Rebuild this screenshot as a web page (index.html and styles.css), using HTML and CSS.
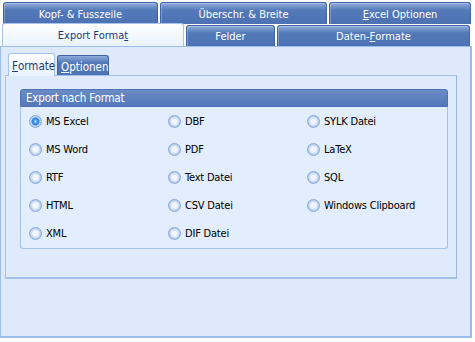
FILE: index.html
```html
<!DOCTYPE html>
<html lang="de">
<head>
    <meta charset="UTF-8">
    <title>Export Einstellungen</title>
    <link rel="stylesheet" href="styles.css">
</head>
<body>
    <div class="dialog">
        <div class="tab-row row-top">
            <div class="tab w1">Kopf- &amp; Fusszeile</div>
            <div class="tab w2">Überschr. &amp; Breite</div>
            <div class="tab w3"><u>E</u>xcel Optionen</div>
        </div>
        <div class="tab-row row-bottom">
            <div class="tab active w4">Export Forma<u>t</u></div>
            <div class="tab w5">Felder</div>
            <div class="tab w6">Daten-<u>F</u>ormate</div>
        </div>

        <div class="panel">
            <div class="sub-tabs">
                <div class="sub-tab active"><u>F</u>ormate</div>
                <div class="sub-tab"><u>O</u>ptionen</div>
            </div>
            <div class="sub-panel">
                <div class="group">
                    <div class="group-header">Export nach Format</div>
                    <div class="options">
                        <label class="option"><span class="radio checked"></span>MS Excel</label>
                        <label class="option"><span class="radio"></span>DBF</label>
                        <label class="option"><span class="radio"></span>SYLK Datei</label>

                        <label class="option"><span class="radio"></span>MS Word</label>
                        <label class="option"><span class="radio"></span>PDF</label>
                        <label class="option"><span class="radio"></span>LaTeX</label>

                        <label class="option"><span class="radio"></span>RTF</label>
                        <label class="option"><span class="radio"></span>Text Datei</label>
                        <label class="option"><span class="radio"></span>SQL</label>

                        <label class="option"><span class="radio"></span>HTML</label>
                        <label class="option"><span class="radio"></span>CSV Datei</label>
                        <label class="option"><span class="radio"></span>Windows Clipboard</label>

                        <label class="option"><span class="radio"></span>XML</label>
                        <label class="option"><span class="radio"></span>DIF Datei</label>
                    </div>
                </div>
            </div>
        </div>
    </div>
</body>
</html>
```

FILE: styles.css
```css
:root {
    --tab-blue: #5479b9;
    --tab-border: #4064a4;
    --panel-bg: #dee9fb;
    --panel-border: #9dbde9;
    --active-text: #1b3a78;
}

* {
    margin: 0;
    padding: 0;
    box-sizing: border-box;
    font-family: 'DejaVu Sans Condensed', 'DejaVu Sans', sans-serif;
}

body {
    background-color: #ffffff;
    font-size: 11px;
    color: #000000;
}

.dialog {
    width: 472px;
}

/* top tab rows */
.tab-row {
    display: flex;
    align-items: flex-end;
    gap: 2px;
}

.row-top {
    padding: 2px 0 0 3px;
    height: 24px;
}

.row-bottom {
    padding-left: 2px;
    height: 23px;
    margin-top: -1px;
}

.tab {
    height: 22px;
    display: flex;
    align-items: center;
    justify-content: center;
    color: #ffffff;
    background: linear-gradient(#8fabdb, var(--tab-blue) 35%, #4c72b3);
    border: 1px solid var(--tab-border);
    border-bottom: none;
    border-radius: 3px 3px 0 0;
    box-shadow: inset 1px 1px 0 rgba(255, 255, 255, 0.25);
    padding-top: 1px;
}

.row-bottom .tab {
    height: 21px;
}

.tab.active {
    height: 23px;
    color: var(--active-text);
    background: linear-gradient(#ffffff, #e9f2fd);
    border-color: #a8c4ea;
    box-shadow: none;
    position: relative;
    z-index: 1;
}

.w1 { width: 155px; }
.w2 { width: 167px; }
.w3 { width: 142px; }
.w4 { width: 182px; }
.w5 { width: 89px; }
.w6 { width: 193px; }

/* main panel */
.panel {
    height: 292px;
    background-color: var(--panel-bg);
    border: 1px solid var(--panel-border);
    border-right-width: 2px;
    border-bottom-width: 2px;
    padding: 5px 0 0 4px;
}

.sub-tabs {
    display: flex;
    align-items: flex-end;
    gap: 2px;
    padding-left: 3px;
    height: 23px;
}

.sub-tab {
    height: 20px;
    padding: 2px 3px 0;
    font-size: 11.5px;
    color: #ffffff;
    background: linear-gradient(#8fabdb, var(--tab-blue) 35%, #4c72b3);
    border: 1px solid var(--tab-border);
    border-bottom: none;
    border-radius: 3px 3px 0 0;
    display: flex;
    align-items: center;
}

.sub-tab.active {
    height: 23px;
    width: 47px;
    color: var(--active-text);
    background: linear-gradient(#ffffff, #e9f2fd);
    border-color: #a8c4ea;
    position: relative;
    z-index: 1;
    margin-bottom: -1px;
}

.sub-tab:not(.active) {
    width: 52px;
}

.sub-panel {
    width: 452px;
    height: 204px;
    border: 1px solid #a3c1ea;
    border-right-color: #98b8e6;
    border-bottom: 2px solid #a3c1ea;
    background-color: #dfeafc;
    padding: 13px 0 0 14px;
}

.group {
    width: 428px;
    height: 160px;
    background-color: #e2edfd;
    border: 1px solid #a6c3ec;
    border-top: none;
    border-radius: 3px;
}

.group-header {
    height: 18px;
    padding-left: 5px;
    display: flex;
    align-items: center;
    color: #ffffff;
    font-size: 11.5px;
    letter-spacing: -0.2px;
    background: linear-gradient(#6a8cc6, #5378b9);
    border: 1px solid #4e72b2;
    border-radius: 3px 3px 0 0;
    margin: 0 -1px;
}

.options {
    display: grid;
    grid-template-columns: 139px 139px 139px;
    grid-auto-rows: 28px;
    padding-left: 8px;
}

.option {
    display: flex;
    align-items: center;
    gap: 4px;
    font-size: 11px;
    letter-spacing: -0.2px;
}

.radio {
    width: 13px;
    height: 13px;
    border-radius: 50%;
    border: 1px solid #86a8d8;
    background: radial-gradient(circle, #f4f8fe 0, #f4f8fe 32%, #c3d6f1 58%, #9fbde6 100%);
    flex: none;
}

.radio.checked {
    background: radial-gradient(circle, #c4e6ff 0, #4a9deb 22%, #2f80d7 42%, #c3d6f1 58%, #9fbde6 100%);
}
```
